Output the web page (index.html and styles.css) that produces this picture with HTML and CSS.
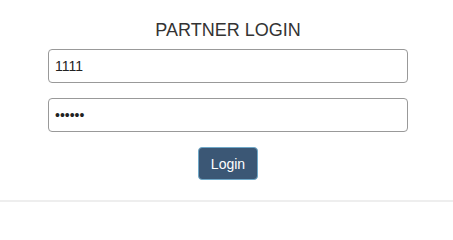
FILE: index.html
```html
<!DOCTYPE html>
<html>
<head>
<meta charset="utf-8">
<link rel="stylesheet" href="styles.css">
</head>
<body>
<div class="page">
  <form class="login">
    <h1 class="title">PARTNER LOGIN</h1>
    <input class="field" type="text" value="1111">
    <input class="field" type="password" value="123456">
    <div class="actions">
      <button class="btn" type="button">Login</button>
    </div>
  </form>
</div>
</body>
</html>
```

FILE: styles.css
```css
html, body {
  margin: 0;
  padding: 0;
  background: #fff;
}
body {
  font-family: "Liberation Sans", Arial, sans-serif;
  color: #333;
}
.page {
  height: 200px;
  border-bottom: 2px solid #eeeeee;
  box-sizing: border-box;
  height: 202px;
}
.login {
  width: 360px;
  margin: 0 45px 0 48px;
  padding-top: 20px;
  display: flex;
  flex-direction: column;
}
.title {
  margin: 0 0 9px 0;
  font-size: 18px;
  line-height: 20px;
  font-weight: normal;
  text-align: center;
  color: #333;
}
.field {
  box-sizing: border-box;
  height: 34px;
  width: 360px;
  margin: 0 0 15px 0;
  padding: 0 6px;
  border: 1px solid #999;
  border-radius: 4px;
  font-family: "Liberation Sans", Arial, sans-serif;
  font-size: 14px;
  color: #222;
  background: #fff;
  outline: none;
}
.actions {
  display: flex;
  justify-content: center;
}
.btn {
  box-sizing: border-box;
  width: 60px;
  height: 33px;
  padding: 0;
  background: #3b5775;
  border: 1px solid #6fa8c8;
  border-radius: 4px;
  color: #fff;
  font-family: "Liberation Sans", Arial, sans-serif;
  font-size: 14px;
}
```
